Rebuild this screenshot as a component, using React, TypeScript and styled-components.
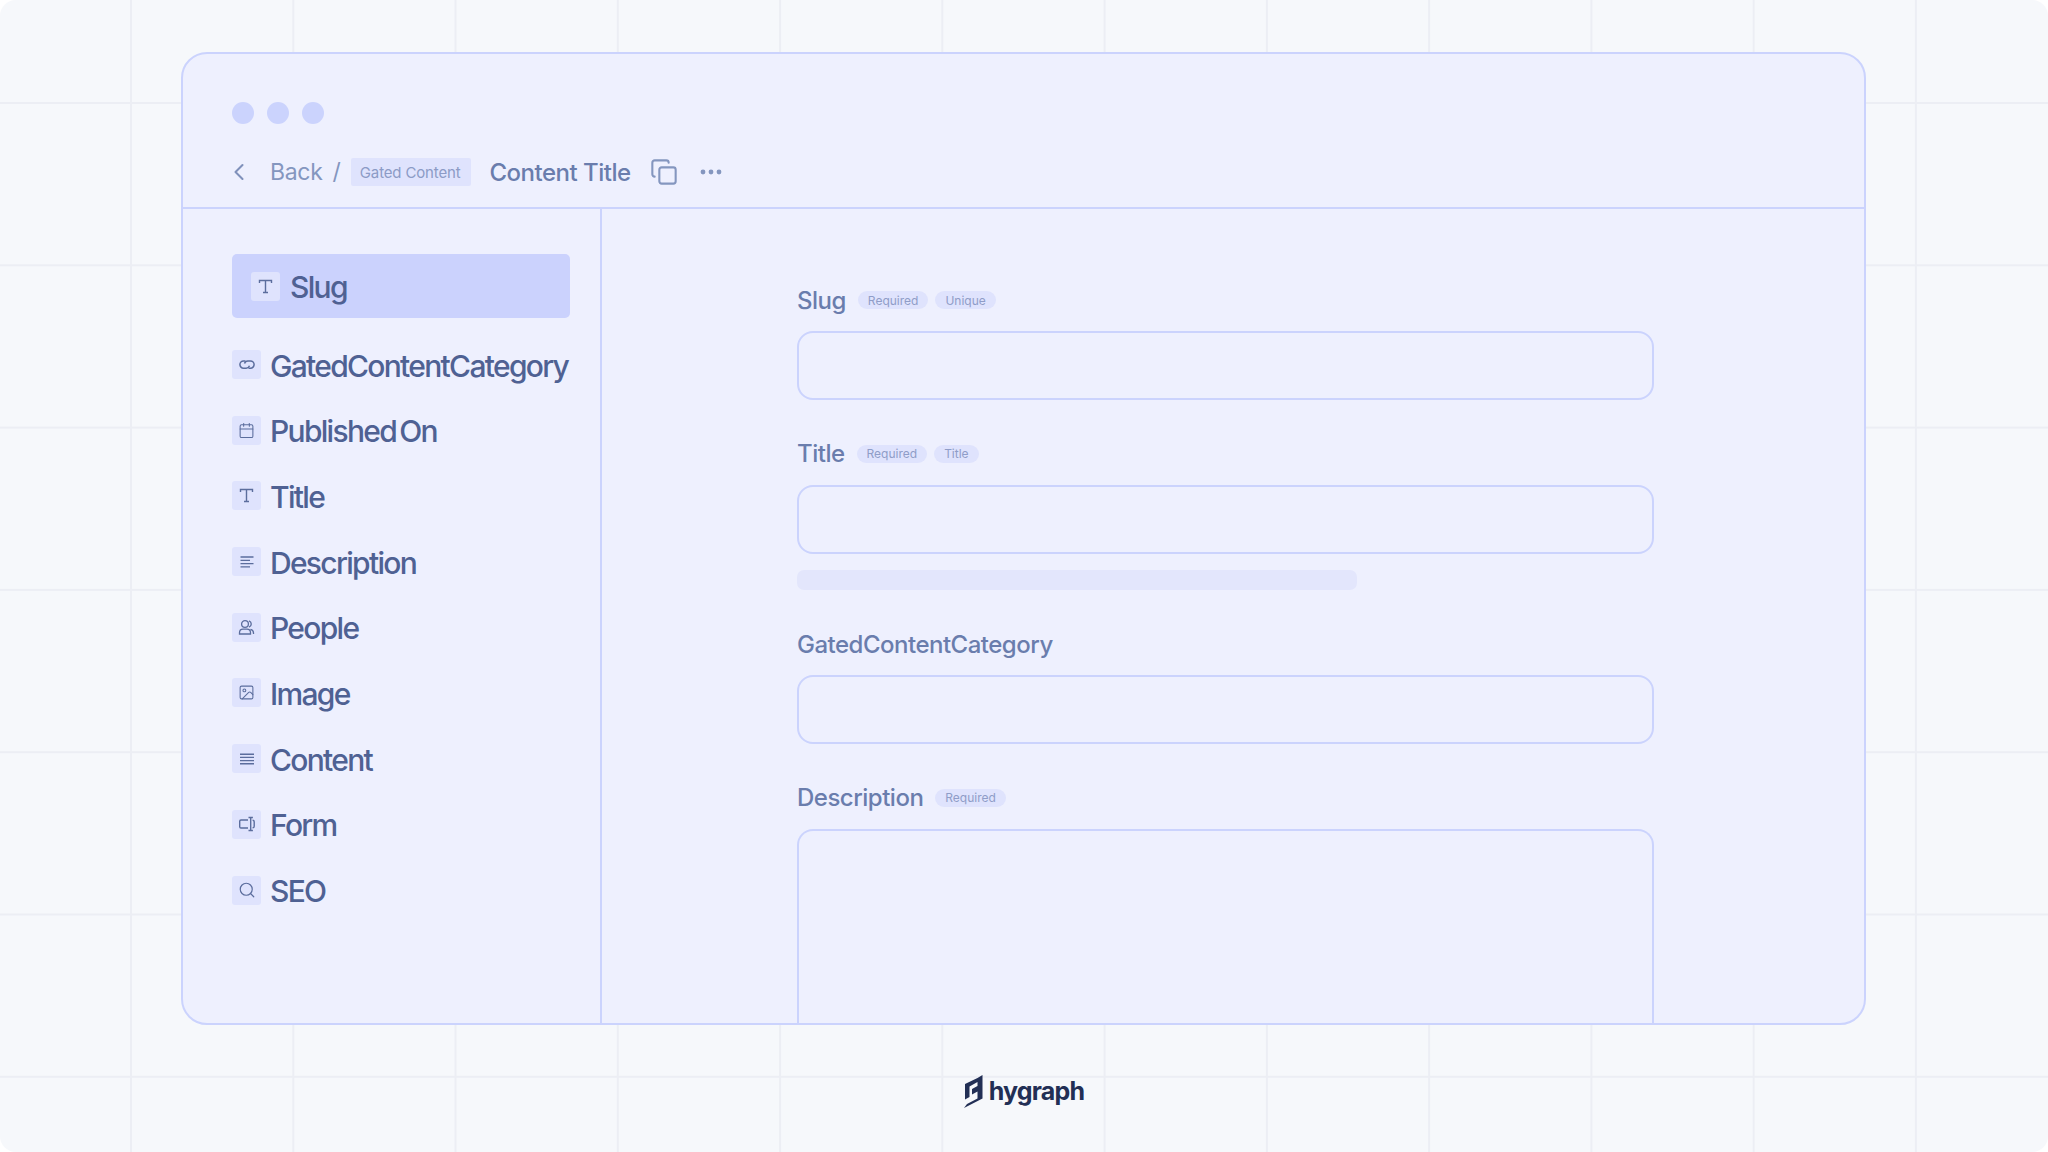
import { ReactNode } from "react";
import styled, { createGlobalStyle } from "styled-components";
import { ChevronLeft, Copy, Calendar, Image, Search } from "lucide-react";

const GlobalStyle = createGlobalStyle`
  html, body {
    margin: 0;
    padding: 0;
    background: #ffffff;
  }
  * {
    box-sizing: border-box;
  }
`;

const Stage = styled.div`
  width: 2048px;
  height: 1152px;
  border-radius: 16px;
  overflow: hidden;
  display: flex;
  flex-direction: column;
  align-items: center;
  padding-top: 52px;
  font-family: Inter, "Liberation Sans", sans-serif;
  background-color: #f6f8fb;
  background-image: linear-gradient(to right, #eceef4 2px, transparent 2px),
    linear-gradient(to bottom, #eceef4 2px, transparent 2px);
  background-size: 162.27px 162.3px;
  background-position: 130px 102px;
`;

const Window = styled.div`
  width: 1685px;
  height: 973px;
  margin-right: 1px;
  flex: none;
  display: flex;
  flex-direction: column;
  overflow: hidden;
  background: #eef0fe;
  border: 2px solid #cbd3fd;
  border-radius: 26px;
`;

const TopBar = styled.header`
  height: 155px;
  flex: none;
  padding: 48px 0 0 49px;
  border-bottom: 2px solid #cbd3fd;
`;

const Lights = styled.div`
  display: flex;
  gap: 13px;
`;

const Light = styled.span`
  width: 22px;
  height: 22px;
  border-radius: 50%;
  background: #cbd3fd;
`;

const Crumbs = styled.div`
  display: flex;
  align-items: center;
  height: 28px;
  margin-top: 34px;
  color: #8496bf;
`;

const BackIcon = styled.span`
  display: flex;
  width: 38px;
  margin-left: -7px;
  color: #8091bb;
`;

const BackText = styled.span`
  margin-left: 7px;
  font-size: 23px;
  letter-spacing: -0.3px;
`;

const Slash = styled.span`
  margin-left: 10px;
  font-size: 23px;
`;

const Crumb = styled.span`
  margin-left: 10px;
  height: 28px;
  padding: 0 10px 0 9px;
  display: flex;
  align-items: center;
  border-radius: 2px;
  background: #dfe3fd;
  font-size: 15px;
  color: #8c9bc6;
  letter-spacing: -0.15px;
`;

const CrumbTitle = styled.span`
  margin-left: 19px;
  font-size: 24px;
  font-weight: 500;
  color: #6a7dad;
  letter-spacing: -0.5px;
`;

const ActionIcon = styled.span<{ $gap: number }>`
  display: flex;
  margin-left: ${(p) => p.$gap}px;
  color: #8496bf;
`;

const Body = styled.div`
  flex: 1;
  min-height: 0;
  display: flex;
`;

const Sidebar = styled.nav`
  width: 419px;
  flex: none;
  padding: 45px 30px 0 49px;
  border-right: 2px solid #cbd3fd;
`;

const ActiveRow = styled.div`
  height: 64px;
  display: flex;
  align-items: center;
  gap: 10px;
  padding-left: 19px;
  margin-bottom: 32px;
  border-radius: 5px;
  background: #cbd2fd;
`;

const Row = styled.div`
  height: 29px;
  display: flex;
  align-items: center;
  gap: 9px;
  margin-bottom: 36.7px;
  white-space: nowrap;
`;

const IconBox = styled.span`
  width: 29px;
  height: 29px;
  flex: none;
  display: flex;
  align-items: center;
  justify-content: center;
  border-radius: 3px;
  background: #dfe3fd;
  color: #5b6d9d;
`;

const RowLabel = styled.span`
  padding-top: 2px;
  font-size: 30px;
  font-weight: 500;
  letter-spacing: -1.7px;
  word-spacing: -3px;
  color: #4f6193;
`;

const Main = styled.main`
  flex: 1;
  min-width: 0;
  display: flex;
  flex-direction: column;
  padding: 76px 0 0 195px;
`;

const Field = styled.section<{ $grow?: boolean }>`
  width: 857px;
  display: flex;
  flex-direction: column;
  margin-bottom: 38.6px;
  ${(p) => (p.$grow ? "flex: 1; margin-bottom: 0;" : "")}
`;

const LabelRow = styled.div`
  height: 30px;
  display: flex;
  align-items: center;
  gap: 7px;
  margin-bottom: 16px;
`;

const FieldLabel = styled.span`
  margin-right: 5px;
  font-size: 24px;
  font-weight: 500;
  letter-spacing: -0.5px;
  color: #6a7dad;
`;

const Tag = styled.span`
  height: 18px;
  padding: 0 10px;
  display: flex;
  align-items: center;
  border-radius: 9px;
  background: #dfe3fd;
  font-size: 12px;
  color: #8f9dc8;
`;

const Input = styled.div`
  height: 69px;
  flex: none;
  border: 2px solid #cbd3fd;
  border-radius: 16px;
`;

const TextArea = styled.div`
  flex: 1;
  border: 2px solid #cbd3fd;
  border-bottom: none;
  border-radius: 16px 16px 0 0;
`;

const Skeleton = styled.div`
  width: 560px;
  height: 20px;
  margin-top: 16px;
  margin-bottom: 1px;
  border-radius: 7px;
  background: #e3e6fc;
`;

const Footer = styled.footer`
  height: 52px;
  margin-top: 40px;
  display: flex;
  align-items: center;
  gap: 6px;
  color: #222f55;
`;

const Wordmark = styled.span`
  font-size: 25px;
  font-weight: 700;
  letter-spacing: -0.8px;
`;

const SerifT = () => (
  <svg width="17" height="17" viewBox="0 0 17 17" fill="none" stroke="currentColor" strokeWidth="1.4">
    <path d="M2.5 5V2.5h12V5M8.5 2.5v12M6 14.5h5" />
  </svg>
);

const ChainLink = () => (
  <svg width="18" height="18" viewBox="0 0 18 18" fill="none" stroke="currentColor" strokeWidth="1.5">
    <path d="M7.5 5H5.5a3.6 3.6 0 0 0 0 7.2h2.7a3.6 3.6 0 0 0 3.3-2.4" />
    <path d="M10.5 12.2h2a3.6 3.6 0 0 0 0-7.2H9.8a3.6 3.6 0 0 0-3.3 2.4" />
  </svg>
);

const ShortLines = () => (
  <svg width="16" height="16" viewBox="0 0 16 16" fill="none" stroke="currentColor" strokeWidth="1.3">
    <path d="M1.5 3h13M1.5 6.3h9.5M1.5 9.6h13M1.5 12.9h9.5" />
  </svg>
);

const EvenLines = () => (
  <svg width="16" height="16" viewBox="0 0 16 16" fill="none" stroke="currentColor" strokeWidth="1.4">
    <path d="M1 3.2h14M1 6.4h14M1 9.6h14M1 12.8h14" />
  </svg>
);

const People = () => (
  <svg width="17" height="17" viewBox="0 0 17 17" fill="none" stroke="currentColor" strokeWidth="1.3">
    <circle cx="7" cy="5" r="3.4" />
    <path d="M11 1.8a3.4 3.4 0 0 1 0 6.4M1.5 15v-1.2A3.6 3.6 0 0 1 5 10.2h4a3.6 3.6 0 0 1 3.5 3.6V15zM12.5 10.4c1.8.4 3 1.8 3 3.6V15" />
  </svg>
);

const FormField = () => (
  <svg width="18" height="18" viewBox="0 0 18 18" fill="none" stroke="currentColor" strokeWidth="1.4">
    <path d="M10 5H3a1.3 1.3 0 0 0-1.3 1.3v5.4A1.3 1.3 0 0 0 3 13h7" />
    <path d="M12.7 2.5v13M10.5 2.5h4.4M10.5 15.5h4.4" />
    <path d="M14.6 5.2a1.6 1.6 0 0 1 1.6 1.6v4.4a1.6 1.6 0 0 1-1.6 1.6" />
  </svg>
);

const Dots = () => (
  <svg width="22" height="6" viewBox="0 0 22 6" fill="currentColor">
    <circle cx="3" cy="3" r="2.4" />
    <circle cx="11" cy="3" r="2.4" />
    <circle cx="19" cy="3" r="2.4" />
  </svg>
);

const LogoMark = () => (
  <svg width="19" height="33" viewBox="0 0 19 33" fill="currentColor">
    <path d="M18.5 0V23.5L0 33L3 29L13.5 23.5V16.5L8 19.5V14L13.5 11V7L5.5 11.5V22L1 24.5V9L13.5 3Z" />
  </svg>
);

const fields: { icon: ReactNode; label: string }[] = [
  { icon: <ChainLink />, label: "GatedContentCategory" },
  { icon: <Calendar size={17} strokeWidth={1.5} />, label: "Published On" },
  { icon: <SerifT />, label: "Title" },
  { icon: <ShortLines />, label: "Description" },
  { icon: <People />, label: "People" },
  { icon: <Image size={17} strokeWidth={1.5} />, label: "Image" },
  { icon: <EvenLines />, label: "Content" },
  { icon: <FormField />, label: "Form" },
  { icon: <Search size={18} strokeWidth={1.6} />, label: "SEO" },
];

export default function App() {
  return (
    <>
      <GlobalStyle />
      <Stage>
        <Window>
          <TopBar>
            <Lights>
              <Light />
              <Light />
              <Light />
            </Lights>
            <Crumbs>
              <BackIcon>
                <ChevronLeft size={28} strokeWidth={1.8} />
              </BackIcon>
              <BackText>Back</BackText>
              <Slash>/</Slash>
              <Crumb>Gated Content</Crumb>
              <CrumbTitle>Content Title</CrumbTitle>
              <ActionIcon $gap={19}>
                <Copy size={28} strokeWidth={1.8} />
              </ActionIcon>
              <ActionIcon $gap={22}>
                <Dots />
              </ActionIcon>
            </Crumbs>
          </TopBar>
          <Body>
            <Sidebar>
              <ActiveRow>
                <IconBox>
                  <SerifT />
                </IconBox>
                <RowLabel>Slug</RowLabel>
              </ActiveRow>
              {fields.map((f) => (
                <Row key={f.label}>
                  <IconBox>{f.icon}</IconBox>
                  <RowLabel>{f.label}</RowLabel>
                </Row>
              ))}
            </Sidebar>
            <Main>
              <Field>
                <LabelRow>
                  <FieldLabel>Slug</FieldLabel>
                  <Tag>Required</Tag>
                  <Tag>Unique</Tag>
                </LabelRow>
                <Input />
              </Field>
              <Field>
                <LabelRow>
                  <FieldLabel>Title</FieldLabel>
                  <Tag>Required</Tag>
                  <Tag>Title</Tag>
                </LabelRow>
                <Input />
                <Skeleton />
              </Field>
              <Field>
                <LabelRow>
                  <FieldLabel>GatedContentCategory</FieldLabel>
                </LabelRow>
                <Input />
              </Field>
              <Field $grow>
                <LabelRow>
                  <FieldLabel>Description</FieldLabel>
                  <Tag>Required</Tag>
                </LabelRow>
                <TextArea />
              </Field>
            </Main>
          </Body>
        </Window>
        <Footer>
          <LogoMark />
          <Wordmark>hygraph</Wordmark>
        </Footer>
      </Stage>
    </>
  );
}
